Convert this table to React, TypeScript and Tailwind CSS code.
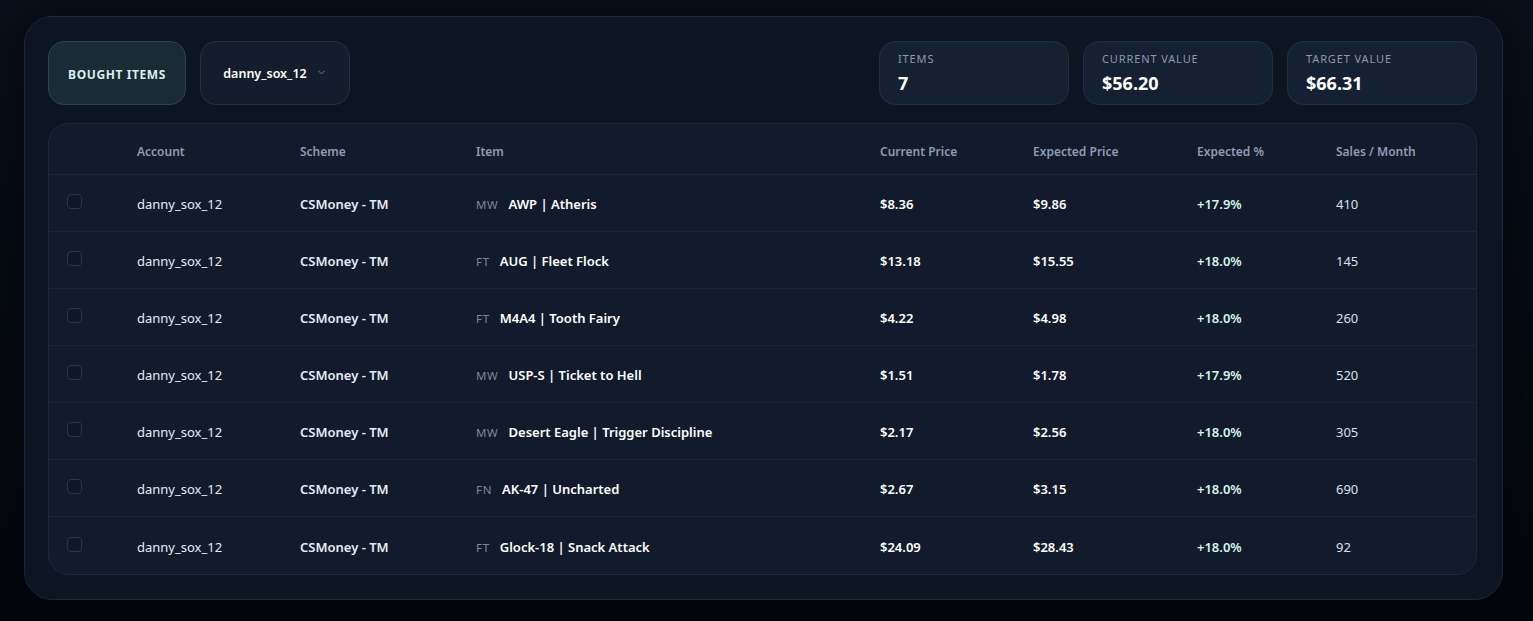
import { ChevronDown } from "lucide-react";

type Row = {
  account: string;
  scheme: string;
  wear: string;
  item: string;
  current: string;
  expected: string;
  pct: string;
  sales: string;
};

const rows: Row[] = [
  { account: "danny_sox_12", scheme: "CSMoney - TM", wear: "MW", item: "AWP | Atheris", current: "$8.36", expected: "$9.86", pct: "+17.9%", sales: "410" },
  { account: "danny_sox_12", scheme: "CSMoney - TM", wear: "FT", item: "AUG | Fleet Flock", current: "$13.18", expected: "$15.55", pct: "+18.0%", sales: "145" },
  { account: "danny_sox_12", scheme: "CSMoney - TM", wear: "FT", item: "M4A4 | Tooth Fairy", current: "$4.22", expected: "$4.98", pct: "+18.0%", sales: "260" },
  { account: "danny_sox_12", scheme: "CSMoney - TM", wear: "MW", item: "USP-S | Ticket to Hell", current: "$1.51", expected: "$1.78", pct: "+17.9%", sales: "520" },
  { account: "danny_sox_12", scheme: "CSMoney - TM", wear: "MW", item: "Desert Eagle | Trigger Discipline", current: "$2.17", expected: "$2.56", pct: "+18.0%", sales: "305" },
  { account: "danny_sox_12", scheme: "CSMoney - TM", wear: "FN", item: "AK-47 | Uncharted", current: "$2.67", expected: "$3.15", pct: "+18.0%", sales: "690" },
  { account: "danny_sox_12", scheme: "CSMoney - TM", wear: "FT", item: "Glock-18 | Snack Attack", current: "$24.09", expected: "$28.43", pct: "+18.0%", sales: "92" },
];

const cols = "grid grid-cols-[88px_163px_176px_404px_153px_164px_139px_1fr] items-center";

function Stat({ label, value }: { label: string; value: string }) {
  return (
    <div className="flex h-16 w-[190px] flex-col justify-center rounded-2xl border border-[#222e40] bg-[#152033] px-[18px]">
      <div className="text-[11px] uppercase tracking-[0.08em] text-[#8a9ab0]">{label}</div>
      <div className="mt-[3px] text-[18px] font-bold leading-6 text-white">{value}</div>
    </div>
  );
}

export default function App() {
  return (
    <div
      className="min-h-[621px] bg-gradient-to-b from-[#0a0f19] to-[#03060b] pt-4"
      style={{ fontFamily: '"Noto Sans", "Open Sans", sans-serif' }}
    >
      <div className="ml-6 w-[1479px] rounded-[28px] border border-[#1c2738] bg-[#0d1522] px-[23px] pb-6 pt-6 shadow-[0_0_40px_rgba(0,0,0,0.5)]">
        <div className="flex items-center">
          <div className="flex h-16 w-[138px] items-center justify-center rounded-2xl border border-[#2b4644] bg-[#1b2b35] pt-[3px] text-[12px] font-bold tracking-[0.05em] text-[#d7f1ec]">
            BOUGHT ITEMS
          </div>
          <div className="ml-[14px] flex h-16 w-[150px] items-center justify-center gap-[9px] rounded-2xl border border-[#243043] bg-[#141d2b] pt-[2px] text-[12.5px] font-semibold text-white">
            <span>danny_sox_12</span>
            <ChevronDown size={11} strokeWidth={2} className="-mt-[3px] text-[#7b889b]" />
          </div>
          <div className="ml-auto flex gap-[14px] pr-[2px]">
            <Stat label="Items" value="7" />
            <Stat label="Current Value" value="$56.20" />
            <Stat label="Target Value" value="$66.31" />
          </div>
        </div>

        <div className="mr-[2px] mt-[18px] overflow-hidden rounded-[20px] border border-[#1d283a] bg-[#111b2c]">
          <div className={`${cols} h-[51px] border-b border-[#1d283a] pt-[6px] text-[12px] font-semibold text-[#8d9cb3]`}>
            <div />
            <div>Account</div>
            <div>Scheme</div>
            <div>Item</div>
            <div>Current Price</div>
            <div>Expected Price</div>
            <div>Expected %</div>
            <div>Sales / Month</div>
          </div>
          {rows.map((r, i) => (
            <div
              key={i}
              className={`${cols} h-[57px] pt-1 text-[13px] text-white ${i < rows.length - 1 ? "border-b border-[#1b2536]" : ""}`}
            >
              <div className="pl-[18px]">
                <div className="-mt-[7px] h-[15px] w-[15px] rounded-[4px] border border-[#2a3649] bg-[#0f1828]" />
              </div>
              <div className="text-[#e5ebf3]">{r.account}</div>
              <div className="font-semibold text-[#e5ebf3]">{r.scheme}</div>
              <div className="flex items-center gap-[10px]">
                <span className="text-[11.5px] tracking-[0.06em] text-[#7c8799]">{r.wear}</span>
                <span className="font-semibold">{r.item}</span>
              </div>
              <div className="font-semibold">{r.current}</div>
              <div className="font-semibold">{r.expected}</div>
              <div className="font-semibold text-[#d5f5e6]">{r.pct}</div>
              <div className="text-[#d8e0ec]">{r.sales}</div>
            </div>
          ))}
        </div>
      </div>
    </div>
  );
}
